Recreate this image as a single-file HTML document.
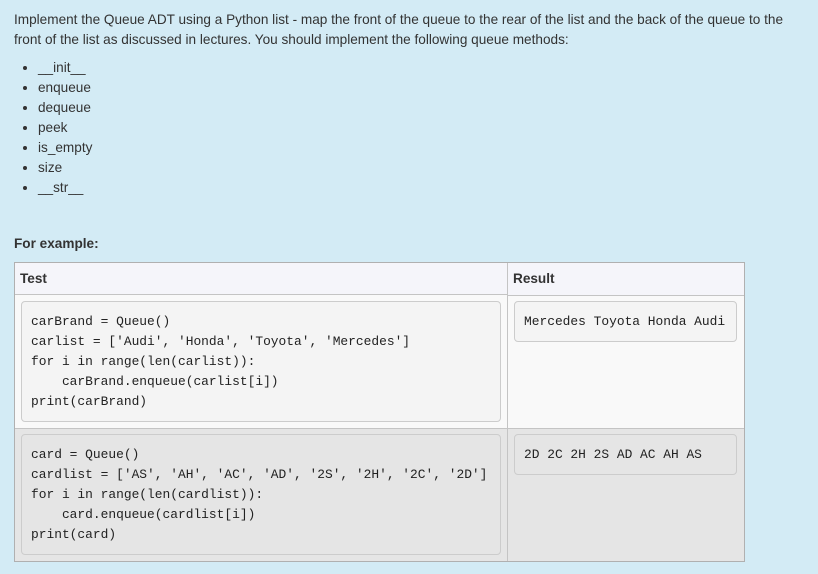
<!DOCTYPE html>
<html><head><style>
body{margin:0;width:818px;height:574px;background:#d3ebf5;font-family:"Liberation Sans",sans-serif;font-size:13.6px;color:#333;overflow:hidden;position:relative}
p{position:absolute;left:14px;top:10px;margin:0;line-height:20px;width:792px}
ul{position:absolute;left:14px;top:58px;margin:0;padding-left:24px;line-height:20px}
.fe{position:absolute;left:14px;top:234px;font-weight:bold;line-height:20px}
.t{position:absolute;left:14px;top:262px;width:729px;height:298px;border:1px solid #b0b0b0;background:#f9f9f9}
.h{position:absolute;top:0;height:32px;background:#f5f5fa;border-bottom:1px solid #c4c4c4;font-weight:bold;line-height:32px}
.v{position:absolute;left:492px;top:0;bottom:0;border-left:1px solid #c4c4c4}
.r2{position:absolute;left:0;right:0;top:165px;bottom:0;background:#e5e5e5;border-top:1px solid #c4c4c4}
.b{position:absolute;border:1px solid #ccc;border-radius:4px;font-family:"Liberation Mono",monospace;font-size:12.9px;line-height:20px;white-space:pre;padding:10px 9px;box-sizing:border-box;color:#222}
</style></head><body>
<p>Implement the Queue ADT using a Python list - map the front of the queue to the rear of the list and the back of the queue to the front of the list as discussed in lectures. You should implement the following queue methods:</p>
<ul><li>__init__</li><li>enqueue</li><li>dequeue</li><li>peek</li><li>is_empty</li><li>size</li><li>__str__</li></ul>
<div class="fe">For example:</div>
<div class="t">
<div class="r2"></div>
<div class="h" style="left:0;width:492px;padding-left:5px;box-sizing:border-box">Test</div>
<div class="h" style="left:493px;right:0;padding-left:5px">Result</div>
<div class="v"></div>
<div class="b" style="left:6px;top:38px;width:480px;height:121px;background:#f4f4f4">carBrand = Queue()
carlist = ['Audi', 'Honda', 'Toyota', 'Mercedes']
for i in range(len(carlist)):
    carBrand.enqueue(carlist[i])
print(carBrand)</div>
<div class="b" style="left:499px;top:38px;width:223px;height:41px;background:#f4f4f4">Mercedes Toyota Honda Audi</div>
<div class="b" style="left:6px;top:171px;width:480px;height:121px;background:#e5e5e5">card = Queue()
cardlist = ['AS', 'AH', 'AC', 'AD', '2S', '2H', '2C', '2D']
for i in range(len(cardlist)):
    card.enqueue(cardlist[i])
print(card)</div>
<div class="b" style="left:499px;top:171px;width:223px;height:41px;background:#e5e5e5">2D 2C 2H 2S AD AC AH AS</div>
</div>
</body></html>
